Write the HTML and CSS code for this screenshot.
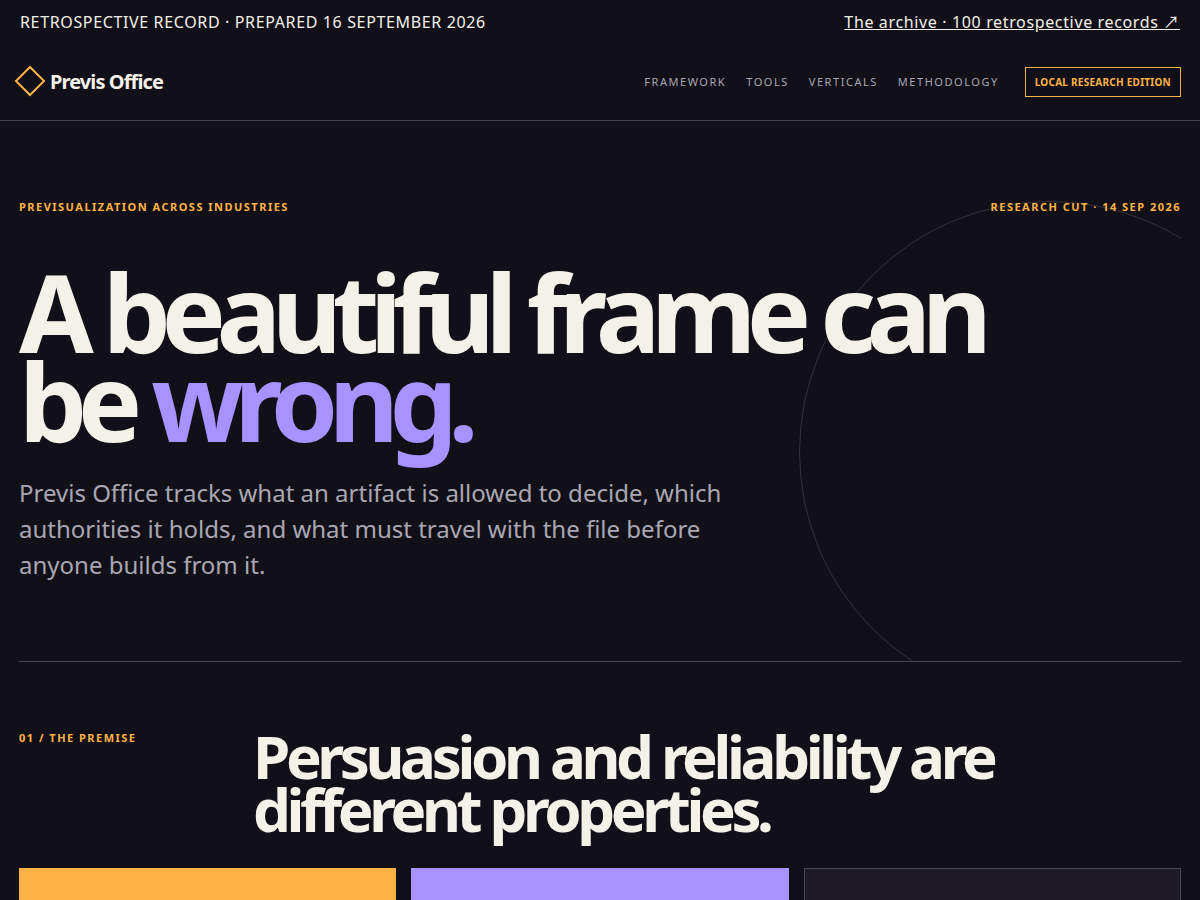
FILE: index.html
```
<!DOCTYPE html>
<html lang="en">
<head>
  <meta charset="UTF-8">
  <meta name="viewport" content="width=device-width, initial-scale=1.0">
  <title>Previs Office</title>
  <link rel="stylesheet" href="styles.css">
</head>
<body>
  <div class="record-bar">
    <span>RETROSPECTIVE RECORD · PREPARED 16 SEPTEMBER 2026</span>
    <a href="#">The archive · 100 retrospective records ↗</a>
  </div>

  <header class="site-header">
    <a class="brand" href="#">
      <svg class="brand-mark" viewBox="0 0 32 32" aria-hidden="true">
        <path d="M16 2 30 16 16 30 2 16Z"/>
      </svg>
      Previs Office
    </a>
    <div class="header-right">
      <nav class="nav">
        <a href="#">Framework</a>
        <a href="#">Tools</a>
        <a href="#">Verticals</a>
        <a href="#">Methodology</a>
      </nav>
      <span class="edition">LOCAL RESEARCH EDITION</span>
    </div>
  </header>

  <main>
    <section class="hero">
      <div class="hero-top eyebrow">
        <span>Previsualization across industries</span>
        <span>Research cut · 14 Sep 2026</span>
      </div>
      <h1>A beautiful frame can be <em>wrong.</em></h1>
      <p class="lead">Previs Office tracks what an artifact is allowed to decide, which authorities it holds, and what must travel with the file before anyone builds from it.</p>
    </section>

    <section class="premise" id="premise">
      <div class="section-head">
        <p class="eyebrow">01 / The premise</p>
        <h2>Persuasion and reliability are different properties.</h2>
      </div>
      <div class="cards">
        <div class="card card-amber"></div>
        <div class="card card-violet"></div>
        <div class="card"></div>
      </div>
    </section>
  </main>
</body>
</html>
```

FILE: styles.css
```
:root {
  --ink: #111018;
  --panel: #1e1b25;
  --paper: #f4f1e8;
  --muted: #aaa7b4;
  --line: #494650;
  --amber: #ffb347;
  --violet: #a792ff;
}

* {
  box-sizing: border-box;
}

body {
  margin: 0;
  background: var(--ink);
  color: var(--paper);
  font-family: "Noto Sans", "Noto Sans CJK JP", sans-serif;
}

a {
  color: inherit;
}

/* Top bar */
.record-bar {
  display: flex;
  flex-wrap: wrap;
  justify-content: space-between;
  gap: 10px 20px;
  padding: 10px 20px;
  font-size: 16px;
  line-height: 24px;
  letter-spacing: 0.04em;
}

/* Header */
.site-header {
  display: flex;
  align-items: center;
  justify-content: space-between;
  min-height: 77px;
  padding: 0 19px 0 14px;
  border-bottom: 1px solid var(--line);
}

.brand,
.nav {
  display: flex;
  padding-bottom: 2px;
}

.brand {
  align-items: center;
  gap: 4px;
  font-size: 20px;
  font-weight: 700;
  letter-spacing: -0.045em;
  text-decoration: none;
}

.brand-mark {
  width: 32px;
  height: 32px;
  fill: none;
  stroke: var(--amber);
  stroke-width: 2;
}

.header-right {
  display: flex;
  align-items: center;
  gap: 26px;
}

.nav {
  gap: 20px;
  color: var(--muted);
  font-size: 11px;
  letter-spacing: 0.14em;
  text-transform: uppercase;
}

.nav a {
  text-decoration: none;
}

.edition {
  padding: 7px 9px;
  border: 1px solid var(--amber);
  color: var(--amber);
  font-size: 10px;
  font-weight: 700;
  line-height: 14px;
  letter-spacing: 0.025em;
}

/* Hero */
.hero,
.premise {
  margin: 0 19px;
}

.hero {
  position: relative;
  overflow: hidden;
  padding: 76px 0 78px;
  border-bottom: 1px solid var(--line);
}

/* big ring behind the headline */
.hero::after {
  content: "";
  position: absolute;
  z-index: -1;
  top: 80px;
  right: -120px;
  width: 500px;
  height: 500px;
  border: 1px solid var(--line);
  border-radius: 50%;
  opacity: 0.6;
}

.eyebrow {
  margin: 0;
  color: var(--amber);
  font-size: 11px;
  font-weight: 700;
  line-height: 20px;
  letter-spacing: 0.135em;
  text-transform: uppercase;
}

.hero-top {
  display: flex;
  justify-content: space-between;
}

h1 {
  max-width: 1050px;
  margin: 50px 0 30px;
  font-size: 108px;
  line-height: 89px;
  letter-spacing: -0.088em;
}

h1 em {
  color: var(--violet);
  font-style: normal;
}

.lead {
  max-width: 720px;
  margin: 0;
  color: var(--muted);
  font-size: 24px;
  line-height: 36px;
}

/* Premise */
.premise {
  padding: 66px 0;
}

.section-head {
  display: grid;
  grid-template-columns: 1fr 4fr;
  gap: 2px;
  margin-bottom: 32px;
}

h2 {
  max-width: 800px;
  margin: 2px 0 0;
  font-size: 60px;
  line-height: 53px;
  letter-spacing: -0.073em;
}

.cards {
  display: grid;
  grid-template-columns: repeat(3, 1fr);
  gap: 15px;
}

.card {
  min-height: 240px;
  border: 1px solid var(--line);
  background: var(--panel);
}

.card-amber {
  border-color: var(--amber);
  background: var(--amber);
}

.card-violet {
  border-color: var(--violet);
  background: var(--violet);
}
```
